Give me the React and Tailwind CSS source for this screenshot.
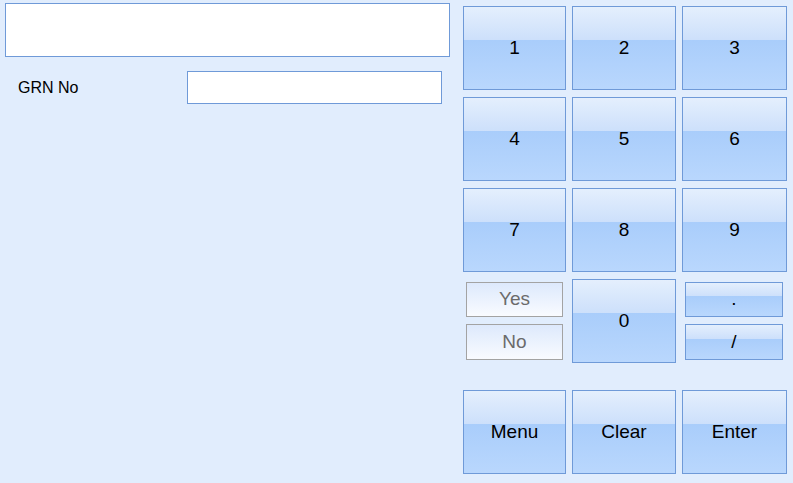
export default function App() {
  const blue =
    "flex items-center justify-center border border-[#6f9ad8] bg-[linear-gradient(to_bottom,#e4effd_0%,#cde0fb_40%,#a9cdfb_40%,#b9d7fd_100%)] text-[19px] text-black";
  const grey =
    "flex items-center justify-center border border-[#a3a3a3] bg-[linear-gradient(to_bottom,#dde9fc,#f9fbff)] text-[19px] text-[#6b6b6b]";

  return (
    <div className="w-[793px] h-[483px] bg-[#e1edfd] flex font-['Liberation_Sans',Arial,sans-serif] overflow-hidden">
      {/* Left side */}
      <div className="w-[463px] pl-[5px] pt-[3px]">
        <div className="w-[445px] h-[54px] bg-white border border-[#6f9ad8]" />
        <div className="flex items-center mt-[14px]">
          <span className="w-[182px] pl-[13px] pt-[1px] text-[16px] text-black">GRN No</span>
          <div className="w-[255px] h-[33px] bg-white border border-[#6f9ad8]" />
        </div>
      </div>

      {/* Keypad */}
      <div className="pt-[6px]">
        <div className="grid grid-cols-[103px_104px_105px] gap-x-[6px] gap-y-[7px] auto-rows-[84px]">
          {["1", "2", "3", "4", "5", "6", "7", "8", "9"].map((k) => (
            <button key={k} className={blue}>
              {k}
            </button>
          ))}

          <div className="flex flex-col gap-[7px] px-[3px] pt-[3px]">
            <button className={`${grey} h-[35px]`}>Yes</button>
            <button className={`${grey} h-[36px]`}>No</button>
          </div>
          <button className={blue}>0</button>
          <div className="flex flex-col gap-[7px] pl-[3px] pr-[4px] pt-[3px]">
            <button className={`${blue} h-[35px]`}>.</button>
            <button className={`${blue} h-[36px]`}>/</button>
          </div>
        </div>

        <div className="grid grid-cols-[103px_104px_105px] gap-x-[6px] mt-[27px] h-[84px]">
          <button className={blue}>Menu</button>
          <button className={blue}>Clear</button>
          <button className={blue}>Enter</button>
        </div>
      </div>
    </div>
  );
}
